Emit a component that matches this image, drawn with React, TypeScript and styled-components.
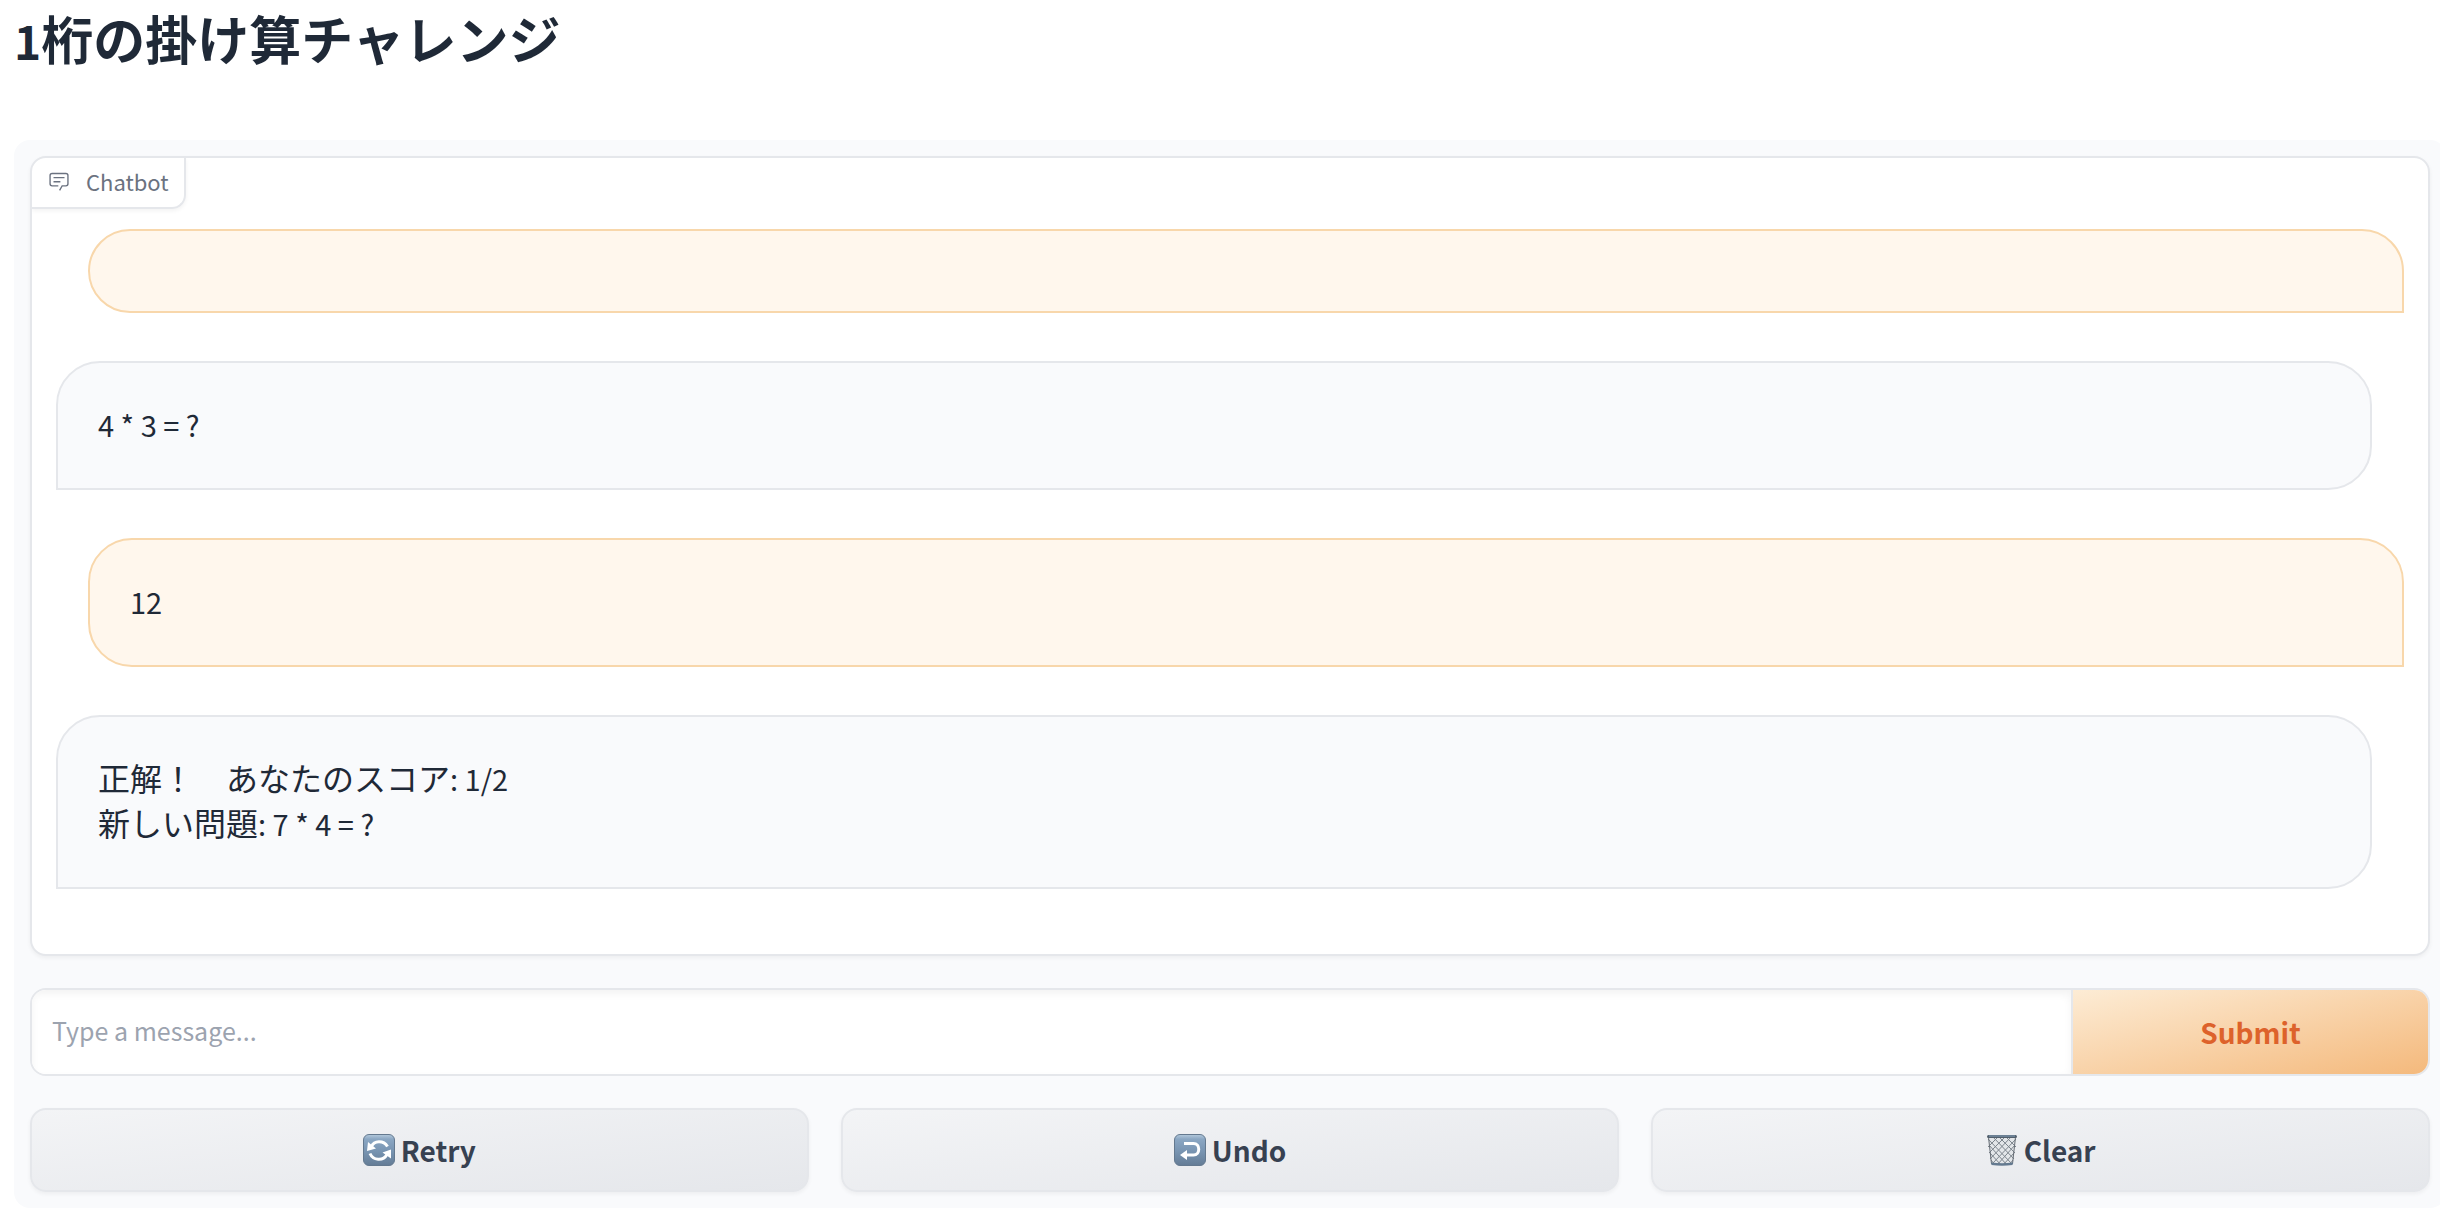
import React from "react";
import styled, { createGlobalStyle } from "styled-components";

const GlobalStyle = createGlobalStyle`
  *, *::before, *::after { box-sizing: border-box; }
  body {
    margin: 0;
    overflow-x: hidden;
    background: #fff;
    color: #1f2937;
    font-family: "Noto Sans CJK JP", "Noto Sans", sans-serif;
  }
`;

const Page = styled.main`
  padding: 6px 10px 2px 14px;
`;

const Title = styled.h1`
  margin: 0 0 70px;
  font-size: 52px;
  line-height: 64px;
  font-weight: 700;
`;

const TitleLatin = styled.span`
  font-size: 46px;
  line-height: 1;
`;

const Panel = styled.section`
  display: flex;
  flex-direction: column;
  gap: 32px;
  margin-right: -16px;
  padding: 16px;
  border-radius: 16px;
  background: #f9fafc;
`;

const ChatCard = styled.div`
  border: 2px solid #e5e7eb;
  border-radius: 16px;
  background: #fff;
  box-shadow: 0 2px 4px rgba(0, 0, 0, 0.05);
  overflow: hidden;
`;

const ChatLabel = styled.h2`
  display: flex;
  align-items: center;
  gap: 16px;
  width: fit-content;
  height: 51px;
  margin: 0;
  padding: 0 15px 3px 16px;
  border: solid #e5e7eb;
  border-width: 0 2px 2px 0;
  border-bottom-right-radius: 14px;
  box-shadow: 0 2px 4px rgba(0, 0, 0, 0.05);
  color: #6b7280;
  font-size: 22px;
  line-height: 36px;
  font-weight: 400;
`;

const Messages = styled.div`
  display: flex;
  flex-direction: column;
  gap: 48px;
  padding: 20px 24px 65px;
`;

const Bubble = styled.div<{ $from: "user" | "bot" }>`
  padding: 38px 40px 42px;
  border: 2px solid ${(p) => (p.$from === "user" ? "#f8d7ab" : "#e5e7eb")};
  border-radius: ${(p) => (p.$from === "user" ? "44px 44px 0 44px" : "44px 44px 44px 0")};
  margin-left: ${(p) => (p.$from === "user" ? "32px" : "0")};
  margin-right: ${(p) => (p.$from === "user" ? "0" : "32px")};
  background: ${(p) => (p.$from === "user" ? "#fff7ed" : "#f9fafc")};
`;

const Line = styled.p`
  margin: 0;
  font-size: 32px;
  line-height: 45px;
`;

const Latin = styled.span`
  font-size: 29px;
  line-height: 1;
`;

const InputRow = styled.form`
  display: flex;
  height: 88px;
  border: 2px solid #e5e7eb;
  border-radius: 16px;
  background: #fff;
  overflow: hidden;
`;

const MessageInput = styled.input`
  flex: 1;
  min-width: 0;
  padding: 0 20px 4px;
  border: 0;
  outline: 0;
  background: #fff;
  box-shadow: inset 0 4px 8px rgba(0, 0, 0, 0.05);
  color: #1f2937;
  font: 400 25px "Noto Sans CJK JP", "Noto Sans", sans-serif;
  &::placeholder { color: #9ca3af; opacity: 1; }
`;

const SubmitButton = styled.button`
  width: 357px;
  padding: 0;
  border: 0;
  border-left: 2px solid #e5e7eb;
  background: linear-gradient(to bottom right, #fdecd5, #f4b97c) padding-box;
  color: #dd622b;
  font: 700 28px "Noto Sans CJK JP", "Noto Sans", sans-serif;
`;

const Actions = styled.div`
  display: grid;
  grid-template-columns: repeat(3, 1fr);
  gap: 32px;
`;

const ActionButton = styled.button`
  display: flex;
  align-items: center;
  justify-content: center;
  gap: 6px;
  height: 84px;
  padding: 0;
  border: 2px solid #e5e7eb;
  border-radius: 16px;
  background: linear-gradient(to bottom right, #f3f4f6, #e5e7eb);
  box-shadow: 0 2px 4px rgba(0, 0, 0, 0.05);
  color: #374151;
  font: 700 28px "Noto Sans CJK JP", "Noto Sans", sans-serif;
`;

const ChatIcon = () => (
  <svg width="22" height="22" viewBox="0 0 32 32" fill="#6b7280" aria-hidden="true">
    <path d="M17.74 30L16 29l4-7h6a2 2 0 0 0 2-2V8a2 2 0 0 0-2-2H6a2 2 0 0 0-2 2v12a2 2 0 0 0 2 2h9v2H6a4 4 0 0 1-4-4V8a4 4 0 0 1 4-4h20a4 4 0 0 1 4 4v12a4 4 0 0 1-4 4h-4.84Z" />
    <path d="M8 10h16v2H8zm0 6h10v2H8z" />
  </svg>
);

const Tile = ({ id, children }: { id: string; children: React.ReactNode }) => (
  <svg width="32" height="32" viewBox="0 0 32 32" aria-hidden="true">
    <defs>
      <linearGradient id={id} x1="0" y1="0" x2="0" y2="1">
        <stop offset="0" stopColor="#b4c9dc" />
        <stop offset="0.15" stopColor="#8ba7c3" />
        <stop offset="0.55" stopColor="#7894b1" />
        <stop offset="1" stopColor="#647c96" />
      </linearGradient>
    </defs>
    <rect x="0.5" y="0.5" width="31" height="31" rx="5.5" fill={`url(#${id})`} stroke="#64798f" />
    {children}
  </svg>
);

const RetryIcon = () => (
  <Tile id="retryTile">
    <g fill="none" stroke="#fff" strokeWidth="3">
      <path d="M8.5 12.5C11 6.5 20.5 6 24.5 12.5" />
      <path d="M7 19.500C10 26.5 20 27.5 24 20.5" />
    </g>
    <path fill="#fff" d="M5 8L4 17L13 14.5ZM28 15.500L19.500 18.5L28 24.500Z" />
  </Tile>
);

const UndoIcon = () => (
  <Tile id="undoTile">
    <path d="M10 9.5H19.5C26.5 9.5 26.5 21 19.5 21H11" fill="none" stroke="#fff" strokeWidth="3" />
    <path fill="#fff" d="M6 21L13 16V26Z" />
  </Tile>
);

const TrashIcon = () => (
  <svg width="32" height="32" viewBox="0 0 32 32" aria-hidden="true">
    <path d="M2 3H30L26.5 30Q16 32 5.5 30Z" fill="#e3e6e9" />
    <g fill="none" stroke="#7d858d" strokeWidth="1">
      <path d="M2 5L26 30M7 3L28 25M13 3L29 19M20 3L30 13M3 11L21 31M4 19L15 31M5 26L9 31" />
      <path d="M30 5L6 30M25 3L4 25M19 3L3 19M12 3L2 13M29 11L11 31M28 19L17 31M27 26L23 31" />
      <path d="M2.5 3L5.5 30M29.5 3L26.5 30" stroke="#666d75" />
    </g>
    <rect x="1" y="1" width="30" height="3" rx="1.5" fill="#525f6c" />
    <path d="M3 2H29" stroke="#86a3bd" />
    <path d="M5 28.5Q16 30 27 28.5L26.5 31Q16 32.5 5.5 31Z" fill="#647a90" />
  </svg>
);

export default function App() {
  return (
    <>
      <GlobalStyle />
      <Page>
        <Title><TitleLatin>1</TitleLatin>桁の掛け算チャレンジ</Title>
        <Panel>
          <ChatCard>
            <ChatLabel><ChatIcon />Chatbot</ChatLabel>
            <Messages>
              <Bubble $from="user" />
              <Bubble $from="bot"><Line><Latin>4 * 3 = ?</Latin></Line></Bubble>
              <Bubble $from="user"><Line><Latin>12</Latin></Line></Bubble>
              <Bubble $from="bot">
                <Line>正解！　あなたのスコア<Latin>: 1/2</Latin></Line>
                <Line>新しい問題<Latin>: 7 * 4 = ?</Latin></Line>
              </Bubble>
            </Messages>
          </ChatCard>
          <InputRow onSubmit={(e) => e.preventDefault()}>
            <MessageInput type="text" aria-label="Message" placeholder="Type a message..." />
            <SubmitButton type="submit">Submit</SubmitButton>
          </InputRow>
          <Actions>
            <ActionButton type="button"><RetryIcon />Retry</ActionButton>
            <ActionButton type="button"><UndoIcon />Undo</ActionButton>
            <ActionButton type="button"><TrashIcon />Clear</ActionButton>
          </Actions>
        </Panel>
      </Page>
    </>
  );
}
